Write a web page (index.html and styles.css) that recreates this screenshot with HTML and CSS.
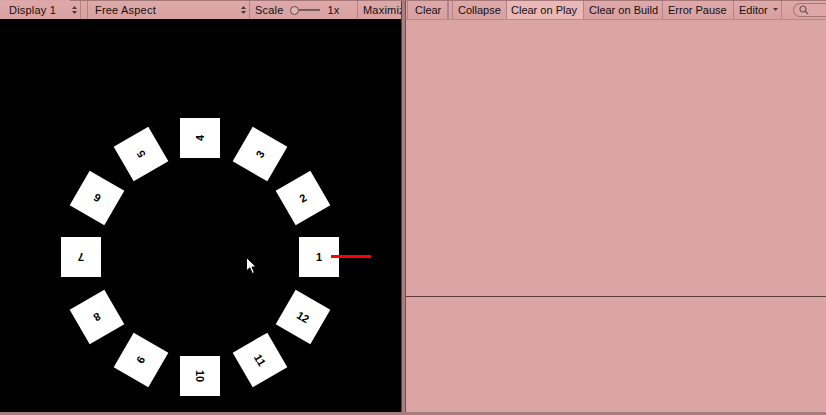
FILE: index.html
```html
<!DOCTYPE html>
<html>
<head>
<meta charset="utf-8">
<link rel="stylesheet" href="styles.css">
</head>
<body>
<div class="app">
  <div class="topline"><div class="tabhl"></div></div>
  <div class="panes">
    <section class="game">
      <div class="toolbar">
        <div class="tb-item dd dd-display"><span>Display 1</span>
          <svg class="updown" width="5" height="8" viewBox="0 0 5 8"><path d="M2.5 0 L5 3 L0 3 Z M0 5 L5 5 L2.5 8 Z" fill="#4a3a3a"/></svg>
        </div>
        <div class="tb-gap"></div>
        <div class="tb-item dd dd-aspect"><span>Free Aspect</span>
          <svg class="updown" width="5" height="8" viewBox="0 0 5 8"><path d="M2.5 0 L5 3 L0 3 Z M0 5 L5 5 L2.5 8 Z" fill="#4a3a3a"/></svg>
        </div>
        <div class="tb-item scale">
          <span>Scale</span>
          <div class="slider"><div class="knob"></div><div class="track"></div></div>
          <span class="scale-val">1x</span>
        </div>
        <div class="tb-item maxi"><span class="maxi-text">Maximize</span></div>
      </div>
      <div class="viewport">
        <div class="card" style="--x:299px;--y:218px;--a:0deg"><span>1</span></div>
        <div class="card" style="--x:283.1px;--y:158.5px;--a:-30deg"><span>2</span></div>
        <div class="card" style="--x:239.5px;--y:114.9px;--a:-60deg"><span>3</span></div>
        <div class="card" style="--x:180px;--y:99px;--a:-90deg"><span>4</span></div>
        <div class="card" style="--x:120.5px;--y:114.9px;--a:-120deg"><span>5</span></div>
        <div class="card" style="--x:76.9px;--y:158.5px;--a:-150deg"><span>6</span></div>
        <div class="card" style="--x:61px;--y:218px;--a:-180deg"><span>7</span></div>
        <div class="card" style="--x:76.9px;--y:277.5px;--a:-210deg"><span>8</span></div>
        <div class="card" style="--x:120.5px;--y:321.1px;--a:-240deg"><span>9</span></div>
        <div class="card" style="--x:180px;--y:337px;--a:-270deg"><span>10</span></div>
        <div class="card" style="--x:239.5px;--y:321.1px;--a:-300deg"><span>11</span></div>
        <div class="card" style="--x:283.1px;--y:277.5px;--a:-330deg"><span>12</span></div>
        <div class="ray"></div>
        <svg class="cursor" width="12" height="18" viewBox="0 0 12 18">
          <path d="M0.5 0.5 L0.5 14 L3.8 10.8 L6.3 16.5 L8.4 15.5 L6 10 L10.2 10 Z" fill="#fff" stroke="#000" stroke-width="1"/>
        </svg>
      </div>
    </section>
    <div class="divider"></div>
    <section class="console">
      <div class="toolbar">
        <div class="tb-gap tb-gap-start"></div>
        <div class="tb-item btn b-clear"><span>Clear</span></div>
        <div class="tb-gap tb-gap-mid"></div>
        <div class="tb-item btn b-collapse"><span>Collapse</span></div>
        <div class="tb-item btn b-cop active"><span>Clear on Play</span></div>
        <div class="tb-item btn b-cob"><span>Clear on Build</span></div>
        <div class="tb-item btn b-err"><span>Error Pause</span></div>
        <div class="tb-item btn b-editor"><span>Editor</span>
          <svg class="caret" width="5" height="3" viewBox="0 0 5 3"><path d="M0 0 L5 0 L2.5 3 Z" fill="#4a3a3a"/></svg>
        </div>
        <div class="search">
          <svg class="mag" width="10" height="10" viewBox="0 0 10 10"><circle cx="4" cy="4" r="3" fill="none" stroke="#6a5555" stroke-width="1.2"/><path d="M6.2 6.2 L9 9" stroke="#6a5555" stroke-width="1.4"/></svg>
        </div>
      </div>
      <div class="log"></div>
      <div class="detail"></div>
    </section>
  </div>
</div>
</body>
</html>
```

FILE: styles.css
```css
* { box-sizing: border-box; }
html, body {
  margin: 0;
  padding: 0;
  width: 826px;
  height: 415px;
  overflow: hidden;
  background: #a47c7c;
}
.app {
  width: 826px;
  height: 415px;
  display: flex;
  flex-direction: column;
  font-family: "Liberation Sans", Arial, sans-serif;
  font-size: 11px;
  color: #151010;
}
.topline {
  height: 1px;
  background: #a57777;
  flex: none;
}
.tabhl {
  width: 70px;
  height: 1px;
  background: #d9a3a3;
}
.panes {
  display: flex;
  height: 411px;
  flex: none;
}
.game {
  width: 401px;
  display: flex;
  flex-direction: column;
  flex: none;
}
.toolbar {
  height: 18px;
  flex: none;
  display: flex;
  align-items: stretch;
  background: linear-gradient(#dfa9a9, #d8a1a1);
  overflow: hidden;
  white-space: nowrap;
}
.tb-item {
  display: flex;
  align-items: center;
  border-right: 1px solid #b08585;
  letter-spacing: 0.2px;
  flex: none;
}
.tb-gap {
  flex: none;
  width: 7px;
  border-right: 1px solid #b08585;
}
.dd {
  justify-content: space-between;
}
.dd-display { width: 81px; padding-left: 9px; padding-right: 3px; }
.dd-aspect { width: 162px; padding-left: 7px; padding-right: 3px; }
.updown { flex: none; }
.scale { width: 108px; padding-left: 5px; }
.slider {
  display: flex;
  align-items: center;
  margin-left: 6px;
}
.knob {
  width: 9px;
  height: 9px;
  border-radius: 50%;
  border: 1px solid #5e4a4a;
  background: #e6b4b4;
}
.track {
  width: 21px;
  height: 2px;
  background: #5e4a4a;
  opacity: 0.8;
}
.scale-val { margin-left: 8px; }
.maxi {
  flex: 1 1 auto;
  padding-left: 5px;
  border-right: none;
  min-width: 0;
}
.maxi-text {
  display: block;
  width: 38px;
  overflow: hidden;
}
.viewport {
  position: relative;
  flex: 1;
  background: #000;
  overflow: hidden;
}
.card {
  position: absolute;
  left: var(--x);
  top: var(--y);
  width: 40px;
  height: 40px;
  background: #fff;
  transform: rotate(var(--a));
  display: flex;
  align-items: center;
  justify-content: center;
  font-family: "Liberation Sans", Arial, sans-serif;
  font-weight: bold;
  font-size: 11px;
  color: #000;
}
.ray {
  position: absolute;
  left: 331px;
  top: 236px;
  width: 40px;
  height: 3px;
  background: #ff0000;
}
.cursor {
  position: absolute;
  left: 246px;
  top: 238px;
}
.divider {
  width: 5px;
  flex: none;
  background: #a88080;
  border-left: 1px solid #5b4242;
  border-right: 1px solid #6e5050;
}
.console {
  flex: 1;
  display: flex;
  flex-direction: column;
  background: #dca5a5;
}
.console .toolbar {
  border-bottom: 1px solid #b88c8c;
  height: 19px;
}
.console .tb-item { letter-spacing: 0; }
.tb-gap-start { width: 2px; }
.tb-gap-mid { width: 5px; border-left: 1px solid #b08585; }
.btn { padding-left: 7px; }
.b-clear { width: 40px; }
.b-collapse { width: 54px; padding-left: 5px; }
.b-cop { width: 77px; padding-left: 4px; }
.b-cob { width: 79px; padding-left: 5px; }
.b-err { width: 71px; padding-left: 5px; }
.b-editor { width: 48px; padding-left: 5px; }
.active { background: #ebb8b8; }
.caret { margin-left: 5px; margin-bottom: 2px; }
.search {
  margin-left: 11px;
  margin-top: 2px;
  margin-bottom: 2px;
  width: 60px;
  border: 1px solid #a27878;
  border-right: none;
  border-radius: 7px 0 0 7px;
  background: #dea8a8;
  display: flex;
  align-items: center;
  padding-left: 5px;
}
.log {
  flex: 1;
  border-bottom: 1px solid #5d3e3e;
}
.detail {
  height: 115px;
  flex: none;
}
```
